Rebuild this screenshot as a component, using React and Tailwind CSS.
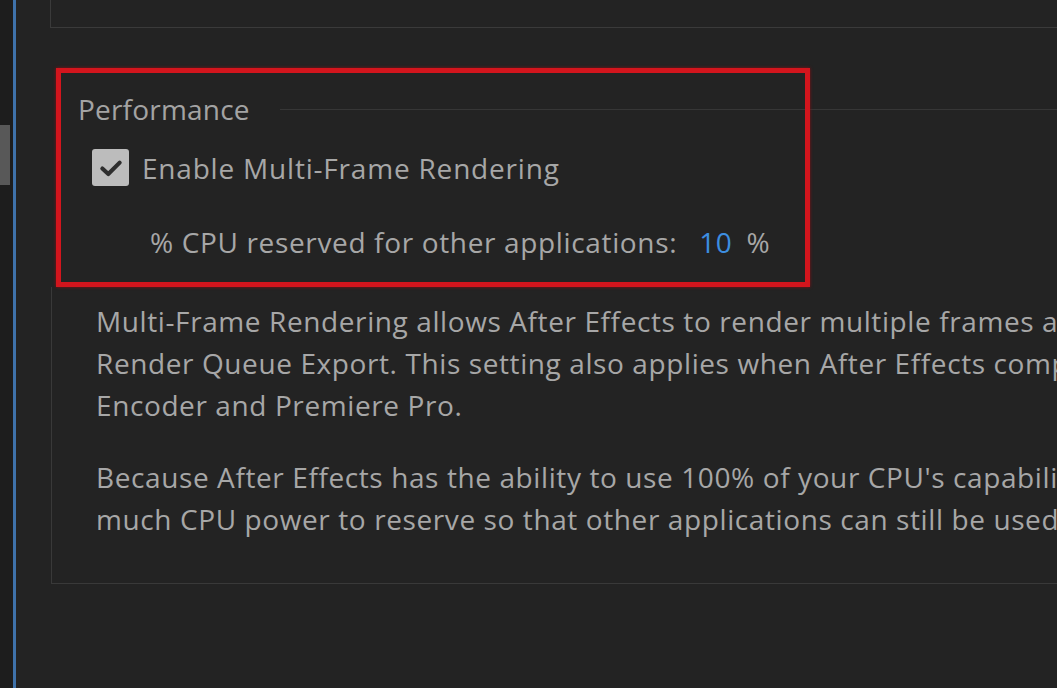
import React from "react";

// Preferences > Performance panel, annotated with a red highlight box
const para1 = [
  "Multi-Frame Rendering allows After Effects to render multiple frames at the same time when previewing and during",
  "Render Queue Export. This setting also applies when After Effects compositions are rendered by Adobe Media",
  "Encoder and Premiere Pro.",
];

const para2 = [
  "Because After Effects has the ability to use 100% of your CPU's capabilities, you can choose how",
  "much CPU power to reserve so that other applications can still be used while After Effects renders.",
];

const Checkbox = () => (
  <div className="w-[37px] h-[37px] rounded-[3px] bg-[#bcbcbc] flex items-center justify-center">
    <svg width="26" height="22" viewBox="0 0 24 20" fill="none">
      <path d="M4 10.5 L9.5 15.5 L20 5" stroke="#2e2e2e" strokeWidth="3.8" strokeLinecap="round" strokeLinejoin="round" />
    </svg>
  </div>
);

export default function App() {
  return (
    <div
      className="relative w-[1057px] h-[688px] overflow-hidden bg-[#232323] flex text-[#a7a7a7]"
      style={{ fontFamily: '"Open Sans", "Noto Sans", sans-serif' }}
    >
      {/* scroll strip */}
      <div className="w-[13px] shrink-0 bg-[#1d1d1d] pt-[125px]">
        <div className="w-[10px] h-[60px] bg-[#585858]" />
      </div>
      <div className="w-[3px] shrink-0 bg-[#3f72aa]" />

      <div className="flex-1 pl-[34px] flex flex-col">
        {/* previous group (cut off at top) */}
        <div className="h-[28px] shrink-0 border-l border-b border-[#3a3a3a]" />

        {/* Performance group */}
        <div className="mt-[68px] h-[26px] flex items-center pl-[28px]">
          <span className="text-[28px] leading-none tracking-[0.2px] text-[#a3a3a3]">Performance</span>
          <div className="flex-1 ml-[30px] h-px bg-[#363636]" />
        </div>

        <div className="mt-[27px] h-[37px] flex items-center pl-[42px] gap-[13px]">
          <Checkbox />
          <span className="text-[28px] leading-none tracking-[0.8px] whitespace-nowrap">Enable Multi-Frame Rendering</span>
        </div>

        <div className="mt-[41px] h-[30px] flex items-center pl-[100px] whitespace-nowrap text-[28px] leading-none tracking-[0.65px]">
          <span>% CPU reserved for other applications:</span>
          <span className="ml-[22px] text-[#3d8ee0]">10</span>
          <span className="ml-[14px]">%</span>
        </div>

        <div className="mt-[30px] ml-px border-l border-b border-[#393939] pl-[44px] pt-[13px] pb-[43px] text-[28px] leading-[42px] tracking-[0.6px] whitespace-nowrap">
          <div>
            {para1.map((l) => (
              <div key={l}>{l}</div>
            ))}
          </div>
          <div className="mt-[30px]">
            {para2.map((l) => (
              <div key={l}>{l}</div>
            ))}
          </div>
        </div>
      </div>

      {/* red annotation */}
      <div className="absolute left-[56px] top-[68px] w-[754px] h-[219px] border-[5px] border-[#d3151d] shadow-[0_0_3px_#8a0f14]" />
    </div>
  );
}
